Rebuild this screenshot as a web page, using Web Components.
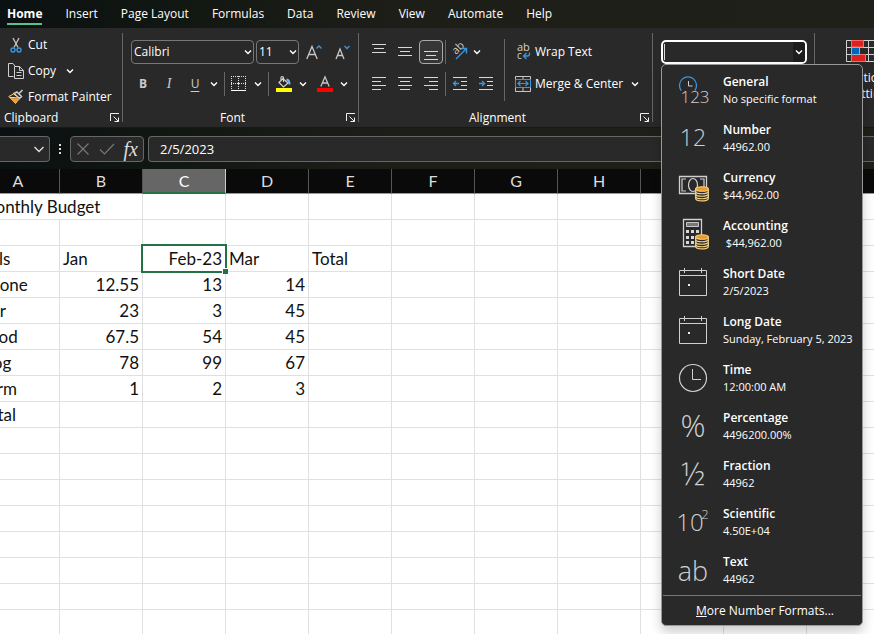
<!DOCTYPE html>
<html lang="en">
<head>
<meta charset="utf-8">
<title>Monthly Budget</title>
<style>
html, body { height: 100%; }
body { margin: 0; overflow: hidden; background: #fff; color: #fff; font: 12px/16px "Open Sans", "Noto Sans", sans-serif; }
</style>
</head>
<body>
<sheet-app></sheet-app>
<script>
const chevron = '<path d="M2 3.5L5 6.5L8 3.5" fill="none" stroke="currentColor" stroke-width="1.4"/>';
const lines = (rows) => rows.map(([x, y, w]) => `<path d="M${x} ${y}.5h${w}" stroke="#d8d8d8"/>`).join('');
const coins = '<g transform="translate(16 12)"><path d="M.7 3v9.500c0 3.200 12.600 3.200 12.600 0V3z" fill="#2b2b2b" stroke="#f5cf80" stroke-width="1.300"/><path d="M.7 5.500c0 3 12.600 3 12.600 0M.7 8c0 3 12.600 3 12.600 0M.7 10.500c0 3 12.600 3 12.600 0" fill="none" stroke="#f5cf80" stroke-width="1.200"/><ellipse cx="7" cy="3" rx="6.300" ry="2.300" fill="#ee9a25" stroke="#f5cf80" stroke-width="1.100"/></g>';
const glyph = (t, size, x, y) => `<text x="${x}" y="${y}" font-size="${size}" font-weight="300" fill="#d0d0d0" text-anchor="middle">${t}</text>`;
const calendar = '<path d="M1.500 3.500h27v25h-27zM1.500 8.500h27M6.500 1v5M23.500 1v5" fill="none" stroke="#d0d0d0"/><path d="M10 17h2v2h-2z" fill="#eee"/>';
const ICONS = {
  chevron: [10, 10, chevron],
  cut: [16, 16, '<path d="M5 1l5 9.500M11 1L6 10.500" stroke="#c8c8c8" stroke-width="1.300" fill="none"/><circle cx="5" cy="13" r="2" fill="none" stroke="#3a96dd" stroke-width="1.400"/><circle cx="11" cy="13" r="2" fill="none" stroke="#3a96dd" stroke-width="1.400"/>'],
  copy: [16, 16, '<path d="M5.500 13.500h-5V.5h4.500l2 2.500M6.500 3.500h5l4 4v8h-9zM11.500 3.500v4h4M8.500 9.500h5M8.500 12.500h5" fill="none" stroke="#d0d0d0"/>'],
  painter: [16, 16, '<path d="M14.500 1L11 4.500M9 3l4.500 4.500-2 2L6 4.500z" fill="none" stroke="#d0d0d0" stroke-width="1.500"/><path d="M5.500 5L.8 7.500l6.700 7 4-5z" fill="#292929" stroke="#f5cf80"/><path d="M2 9l9.500.5-4 5z" fill="#f0a030"/><path d="M2 8.300l9 .7" stroke="#ffe0a0"/>'],
  launcher: [10, 10, '<path d="M.5 8V.5H9M3.500 3.500l5 5M4.500 8.500h4v-4" fill="none" stroke="#eee"/>'],
  grow: [16, 16, '<path d="M.8 15L6 2.500 11.200 15M2.700 10.500h6.600" fill="none" stroke="#c8c8c8" stroke-width="1.300"/><path d="M10.500 4.500L13 2l2.500 2.500" fill="none" stroke="#3a96dd" stroke-width="1.300"/>'],
  shrink: [16, 16, '<path d="M2 15l4-10 4 10M3.500 11.500h5" fill="none" stroke="#c8c8c8" stroke-width="1.300"/><path d="M10.500 2L13 4.500 15.500 2" fill="none" stroke="#3a96dd" stroke-width="1.300"/>'],
  borders: [16, 16, '<path d="M0 .5h15M0 7.500h15M.5 0v14M7.500 0v14M14.500 0v14" fill="none" stroke="#ddd" stroke-dasharray="1 1"/><path d="M6 7.500h3M7.500 6v3" stroke="#ddd"/><path d="M0 14.500h15" stroke="#fff"/>'],
  fill: [16, 16, '<path d="M3 6.500l4-4 5 4.500-4.500 4-4.500-4.500zM5 4.500V1.500c0-1.200 2.500-1.200 2.500 0V6" fill="none" stroke="#d0d0d0" stroke-width="1.200"/><path d="M10.500 3.500q3 .5 3 5" fill="none" stroke="#7bb8e8" stroke-width="2"/><path d="M0 12h16v4H0z" fill="#ff0"/>'],
  color: [16, 16, '<path d="M3.800 10.500L8 .8l4.200 9.700M5.300 7h5.400" fill="none" stroke="#c8c8c8" stroke-width="1.300"/><path d="M0 12h16v4H0z" fill="#f00"/>'],
  top: [16, 16, lines([[1, 0, 14], [3, 4, 10], [1, 8, 14]])],
  middle: [16, 16, lines([[1, 3, 14], [3, 7, 10], [1, 11, 14]])],
  bottom: [16, 16, lines([[1, 7, 14], [3, 11, 10], [1, 15, 14]])],
  left: [16, 16, lines([[1, 1, 14], [1, 5, 9], [1, 9, 14], [1, 13, 9]])],
  center: [16, 16, lines([[1, 1, 14], [3, 5, 10], [1, 9, 14], [3, 13, 10]])],
  right: [16, 16, lines([[1, 1, 14], [6, 5, 9], [1, 9, 14], [6, 13, 9]])],
  outdent: [16, 16, lines([[1, 1, 14], [9, 5, 6], [9, 9, 6], [1, 13, 14]]) + '<path d="M7 7.500H1.500M4 5L1.500 7.500 4 10" fill="none" stroke="#3a96dd" stroke-width="1.300"/>'],
  indent: [16, 16, lines([[1, 1, 14], [9, 5, 6], [9, 9, 6], [1, 13, 14]]) + '<path d="M1 7.500h5.500M4 5l2.500 2.500L4 10" fill="none" stroke="#3a96dd" stroke-width="1.300"/>'],
  orient: [18, 18, '<text transform="translate(6 12) rotate(-45)" font-size="11" fill="#c8c8c8">ab</text><path d="M6 16L16 6M11.500 5.500h5v5" fill="none" stroke="#3a96dd" stroke-width="1.400"/>'],
  wrap: [16, 16, '<text x="2" y="7" font-size="11" fill="#d0d0d0">ab</text><text x="2" y="15" font-size="10" fill="#d0d0d0">c</text><path d="M14.500 8.500v1.500q0 2-2 2H9M11.500 9L8.500 12l3 3" fill="none" stroke="#3a96dd" stroke-width="1.300"/>'],
  merge: [16, 16, '<path d="M.5 .5h15v15H.5zM8 0v4M8 12v4" fill="none" stroke="#c8c8c8"/><path d="M.5 3.500h15v8H.5z" fill="#292929" stroke="#3a96dd"/><path d="M3 7.500h10M5.500 5L3 7.500l2.500 2.500M10.500 5L13 7.500l-2.500 2.500" fill="none" stroke="#3a96dd" stroke-width="1.200"/>'],
  cond: [34, 22, '<path d="M.5 .5h33v21H.5zM0 7.500h34M0 14.500h34M5.500 0v22M22.500 0v22M28.500 0v22" fill="none" stroke="#d0d0d0"/><path d="M5.500 .5h12v6.500h-12zM5.500 14.500h14v7h-14z" fill="#d9231c" stroke="#f66"/><path d="M5.500 7.500h8v7h-8z" fill="#0067b8" stroke="#7bb8e8"/>'],
  cancel: [14, 14, '<path d="M1.500 1.500l11 11M12.500 1.500l-11 11" stroke="#777" stroke-width="1.200"/>'],
  accept: [16, 14, '<path d="M1 7.500l4.500 4.500L15 2" fill="none" stroke="#777" stroke-width="1.200"/>'],
  wide: [10, 10, '<path d="M.5 3L5 7.500 9.500 3" fill="none" stroke="#ddd" stroke-width="1.400"/>'],
  dots: [4, 14, '<path d="M1 2h2v2H1zM1 6h2v2H1zM1 10h2v2H1z" fill="#ddd"/>'],
  general: [30, 30, '<path d="M3.200 15.500A8.500 8.500 0 1 1 16.800 15.500" fill="none" stroke="#3a96dd" stroke-width="1.300"/><path d="M10.500 6v5h4" fill="none" stroke="#d0d0d0"/>' + glyph('123', 17, 17, 28)],
  number: [30, 30, glyph('12', 23, 15, 23)],
  currency: [30, 30, '<path d="M1.500 5.500h27v17h-27z" fill="none" stroke="#d0d0d0" stroke-width="1.300"/><path d="M8 8H4v12h4M22 8h4v8" fill="none" stroke="#d0d0d0" stroke-width="1.200"/><ellipse cx="15" cy="14" rx="4.500" ry="6.500" fill="none" stroke="#d0d0d0" stroke-width="1.200"/><g transform="translate(1 3)">' + coins + '</g>'],
  accounting: [30, 30, '<path d="M5.500 .5h18v27h-18z" fill="none" stroke="#d0d0d0" stroke-width="1.300"/><path d="M8.500 3.500h12v4h-12z" fill="#777" stroke="#c8c8c8"/><path d="M8 11h3v3H8zM13 11h3v3h-3zM18 11h3v3h-3zM8 17h3v3H8zM13 17h3v3h-3zM8 22h3v3H8zM13 22h3v3h-3z" fill="#d8d8d8"/><g transform="translate(1 3)">' + coins + '</g>'],
  date: [30, 30, calendar],
  time: [30, 30, '<circle cx="15" cy="15" r="13.500" fill="none" stroke="#d0d0d0" stroke-width="1.200"/><path d="M14.500 6v10.500H23" fill="none" stroke="#d0d0d0"/>'],
  percent: [30, 30, glyph('%', 31, 15, 26)],
  fraction: [30, 30, glyph('½', 31, 15, 26)],
  scientific: [30, 30, glyph('10', 24, 12, 24) + glyph('2', 13, 27, 12)],
  text: [30, 30, glyph('ab', 27, 15, 26)]
};

const define = (name, css, html) => {
  const t = document.createElement('template');
  customElements.define(name, class extends HTMLElement {
    connectedCallback() {
      if (this.shadowRoot) return;
      t.innerHTML = `<style>*{box-sizing:border-box}button,input,select{font:inherit;color:inherit;background:none;border:0;margin:0;padding:0}${css}</style>${typeof html === 'function' ? html(this) : html}`;
      this.attachShadow({ mode: 'open' }).append(t.content.cloneNode(true));
    }
  });
};

define('ui-icon', ':host{display:inline-flex;flex:none}svg{display:block;overflow:visible}', (el) => {
  const [w, h, body] = ICONS[el.getAttribute('name')];
  return `<svg width="${w}" height="${h}" viewBox="0 0 ${w} ${h}" aria-hidden="true">${body}</svg>`;
});

/* Button with an icon and optional slotted text */
define('tool-button', `:host{display:flex;flex:none;width:26px;height:24px}
button{display:flex;align-items:center;justify-content:center;gap:4px;width:100%;white-space:nowrap}
:host([wide]){width:auto}:host([wide]) button{width:auto}
:host([small]){width:12px}
:host([active]) button{border:1px solid #aaa;border-radius:4px;background:#363636}
:host([active]){width:24px;margin:0 1px}`,
(el) => `<button type="button" aria-label="${el.getAttribute('label') || el.textContent}"${el.hasAttribute('active') ? ' aria-pressed="true"' : ''}>${el.getAttribute('icon') ? `<ui-icon name="${el.getAttribute('icon')}"></ui-icon>` : ''}<slot></slot></button>`);

define('tool-select', `:host{display:grid;height:24px}
select,ui-icon{grid-area:1/1}
select{appearance:none;width:100%;height:100%;border:1px solid #777;border-radius:4px;padding:0 2px}
ui-icon{place-self:center end;margin-right:1px;pointer-events:none}`,
(el) => `<select aria-label="${el.getAttribute('label')}"><option>${el.getAttribute('value')}</option></select><ui-icon name="chevron"></ui-icon>`);

define('tool-rule', ':host{flex:none;width:1px;height:24px;background:#666}', '');

define('ribbon-group', `:host{display:flex;flex-direction:column;flex:none;padding-top:4px;background:linear-gradient(#666,#666) right 0 top 5px/1px 89px no-repeat}
.body{height:78px}
footer{display:flex;align-items:center;height:16px;padding:0 3px 0 4px}
footer span{flex:1;text-align:center;padding-right:8px}
:host([start]) footer span{text-align:left}
footer button{display:flex}`,
(el) => `<div class="body"><slot></slot></div><footer><span>${el.getAttribute('label') || ''}</span>${el.getAttribute('label') ? `<button type="button" aria-label="${el.getAttribute('label')} settings"><ui-icon name="launcher"></ui-icon></button>` : ''}</footer>`);

define('ribbon-tabs', `:host{display:block}
nav{display:flex;gap:23px;height:28px;padding:0 7px}
a{color:#fff;text-decoration:none;height:26px;line-height:27px;white-space:nowrap}
a[aria-current]{font-weight:700;box-shadow:inset 0 -2px #5cc08a;height:25px}`,
() => `<nav aria-label="Ribbon">${['Home', 'Insert', 'Page Layout', 'Formulas', 'Data', 'Review', 'View', 'Automate', 'Help'].map((t, i) => `<a href="#${t.replace(' ', '-')}"${i ? '' : ' aria-current="page"'}>${t}</a>`).join('')}</nav>`);

define('format-item', `:host{display:block}
button{display:grid;grid-template-columns:30px 1fr;column-gap:15px;align-items:center;width:100%;height:48px;padding-left:16px;text-align:left;white-space:pre}
b{display:block;font-weight:600;height:17px}span{display:block;font-size:11px}`,
(el) => `<button type="button" role="option"><ui-icon name="${el.getAttribute('icon')}"></ui-icon><div><b>${el.getAttribute('name')}</b><span><slot></slot></span></div></button>`);

define('format-menu', `:host{display:block;width:202px;background:#292929;border:1px solid #999;border-radius:5px;box-shadow:0 6px 12px #0003}
.list{padding:1px 0}
.more{display:block;width:calc(100% - 2px);margin:0 1px;height:30px;border-top:1px solid #777;padding-left:6px}`,
() => `<div class="list" role="listbox" aria-label="Number format">${[
  ['general', 'General', 'No specific format'], ['number', 'Number', '44962.00'], ['currency', 'Currency', '$44,962.00'],
  ['accounting', 'Accounting', ' $44,962.00'], ['date', 'Short Date', '2/5/2023'], ['date', 'Long Date', 'Sunday, February 5, 2023'],
  ['time', 'Time', '12:00:00 AM'], ['percent', 'Percentage', '4496200.00%'], ['fraction', 'Fraction', '44962'],
  ['scientific', 'Scientific', '4.50E+04'], ['text', 'Text', '44962']
].map(([i, n, s]) => `<format-item icon="${i}" name="${n}">${s}</format-item>`).join('')}</div><button type="button" class="more"><u>M</u>ore Number Formats...</button>`);

define('format-picker', `:host{display:block;position:relative;width:146px}
.box{display:flex;align-items:center;height:24px;border:2px solid #fff;border-radius:5px;overflow:hidden}
input{flex:1;min-width:0;height:16px;border-left:1px solid #ddd;margin-left:1px;outline:0}
button{display:flex;align-items:center;justify-content:center;width:12px;height:20px;background:#1d1d1d}
format-menu{position:absolute;z-index:5;top:24px;left:0}`,
`<div class="box"><input type="text" aria-label="Number format"><button type="button" aria-label="Show number formats"><ui-icon name="chevron"></ui-icon></button></div><format-menu></format-menu>`);

define('main-ribbon', `:host{display:flex;height:100px;background:#292929;border-bottom:1px solid #181818}
.clip{display:grid;grid-template-rows:repeat(3,26px);align-items:center;padding-left:8px}
.row{display:flex;align-items:center}
.rows{display:grid;grid-template-rows:24px 24px;row-gap:8px;padding-top:8px}
.font{padding-left:7px}
.font .row:first-child{gap:2px;padding-left:1px}
.align{display:flex;padding-left:7px}
.num{padding:8px 8px 0 8px}
.cond{display:grid;justify-items:center;gap:8px;width:96px;padding-top:8px}
.cond span{text-align:center}
.cond span ui-icon{margin-left:4px}
.b{font-weight:700;color:#ccc}.i{font:italic 14px/16px "Liberation Serif",serif;color:#ccc}.u{text-decoration:underline;text-underline-offset:3px;color:#ccc}`,
`<ribbon-group label="Clipboard" start style="width:123px"><div class="clip">
<tool-button wide icon="cut">Cut</tool-button>
<div class="row"><tool-button wide icon="copy">Copy</tool-button><tool-button small icon="chevron" label="Copy options" style="margin-left:8px"></tool-button></div>
<tool-button wide icon="painter">Format Painter</tool-button></div></ribbon-group>
<ribbon-group label="Font" style="width:236px"><div class="rows font">
<div class="row"><tool-select label="Font" value="Calibri" style="width:123px"></tool-select><tool-select label="Font size" value="11" style="width:43px"></tool-select><tool-button icon="grow" label="Increase font size"></tool-button><tool-button icon="shrink" label="Decrease font size"></tool-button></div>
<div class="row"><tool-button label="Bold"><span class="b">B</span></tool-button><tool-button label="Italic"><span class="i">I</span></tool-button><tool-button label="Underline"><span class="u">U</span></tool-button><tool-button small icon="chevron" label="Underline options"></tool-button><tool-rule style="margin:0 1px 0 4px"></tool-rule>
<tool-button icon="borders" label="Borders"></tool-button><tool-button small icon="chevron" label="Border options"></tool-button><tool-rule style="margin:0 2px 0 4px"></tool-rule>
<tool-button icon="fill" label="Fill color"></tool-button><tool-button small icon="chevron" label="Fill options"></tool-button><tool-button icon="color" label="Font color" style="margin-left:3px"></tool-button><tool-button small icon="chevron" label="Font color options"></tool-button></div>
</div></ribbon-group>
<ribbon-group label="Alignment" style="width:294px"><div class="align">
<div class="rows"><div class="row"><tool-button icon="top" label="Top align"></tool-button><tool-button icon="middle" label="Middle align"></tool-button><tool-button icon="bottom" label="Bottom align" active></tool-button><tool-rule style="margin:0 1px"></tool-rule><tool-button icon="orient" label="Orientation" style="width:24px"></tool-button><tool-button small icon="chevron" label="Orientation options"></tool-button></div>
<div class="row"><tool-button icon="left" label="Align left"></tool-button><tool-button icon="center" label="Center"></tool-button><tool-button icon="right" label="Align right"></tool-button><tool-rule style="margin:0 1px"></tool-rule><tool-button icon="outdent" label="Decrease indent"></tool-button><tool-button icon="indent" label="Increase indent"></tool-button></div></div>
<tool-rule style="height:62px;margin:7px 10px 0 5px"></tool-rule>
<div class="rows"><tool-button wide icon="wrap">Wrap Text</tool-button><div class="row"><tool-button wide icon="merge">Merge &amp; Center</tool-button><tool-button small icon="chevron" label="Merge options" style="margin-left:6px"></tool-button></div></div>
</div></ribbon-group>
<ribbon-group style="width:162px"><div class="num"><format-picker></format-picker></div></ribbon-group>
<ribbon-group style="width:96px"><button type="button" class="cond"><ui-icon name="cond"></ui-icon><span>Conditional<br>Formatting<ui-icon name="chevron"></ui-icon></span></button></ribbon-group>`);

define('formula-bar', `:host{display:flex;align-items:center;height:41px;padding-top:1px}
.box{display:flex;align-items:center;height:26px;border:1px solid #666;border-radius:4px;background:#292929}
.name{width:50px;border-left:0;border-radius:0 4px 4px 0;justify-content:flex-end;padding-right:5px}
.name input{flex:1;min-width:0}
button{display:flex}
ui-icon.d{margin:0 8px}
.acts{width:74px;justify-content:space-between;padding:0 5px}
.fx{font:italic 20px/20px "Liberation Serif",serif;color:#ddd}
.value{flex:1;margin-left:4px;border-right:0;border-radius:4px 0 0 4px}
.value input{flex:1;padding-left:11px;font-size:13px}`,
`<div class="box name"><input aria-label="Name box"><button type="button" aria-label="Show names"><ui-icon name="wide"></ui-icon></button></div><ui-icon class="d" name="dots"></ui-icon>
<div class="box acts"><button type="button" aria-label="Cancel"><ui-icon name="cancel"></ui-icon></button><button type="button" aria-label="Enter"><ui-icon name="accept"></ui-icon></button><button type="button" class="fx" aria-label="Insert function">fx</button></div>
<div class="box value"><input aria-label="Formula" value="2/5/2023"></div>`);

const ROWS = [['Monthly Budget'], [], ['Bills', 'Jan', 'Feb-23', 'Mar', 'Total'], ['Phone', 12.55, 13, 14], ['Car', 23, 3, 45], ['Food', 67.5, 54, 45], ['Dog', 78, 99, 67], ['Farm', 1, 2, 3], ['Total']];
define('data-grid', `:host{display:block;overflow:hidden;flex:1;background:#fff;color:#111;font:17px/20px Lato,sans-serif}
table{border-collapse:separate;border-spacing:0;table-layout:fixed;width:913px;margin-left:-23px}
th{height:25px;padding:0;font-weight:400;font-size:16px;line-height:20px;color:#ddd;background:#0a0a0a;border-right:1px solid #555;border-bottom:1px solid #999}
th.on{background:#666;color:#fff;border-bottom:2px solid #217346;border-right-color:#ccc}
td{height:26px;padding:0 3px 0 3px;line-height:24px;border:solid #e0e0e0;border-width:0 1px 1px 0;white-space:nowrap}
td.n{text-align:right}
td.sel{position:relative}
td.sel::before{content:"";position:absolute;inset:-2px;border:2px solid #217346}
td.sel::after{content:"";position:absolute;right:-3px;bottom:-3px;width:5px;height:5px;background:#217346;border:solid #fff;border-width:1px 0 0 1px;box-sizing:content-box}`,
() => {
  const cols = [...'ABCDEFGHIJK'];
  let h = '<table><thead><tr>' + cols.map((c) => `<th scope="col"${c === 'C' ? ' class="on"' : ''}>${c}</th>`).join('') + '</tr></thead><tbody>';
  for (let r = 0; r < 18; r++) {
    const row = ROWS[r] || [];
    h += '<tr>';
    for (let c = 0; c < 11; c++) {
      if (r === 0 && c === 1) continue;
      const v = row[c] ?? '', s = v === 'Feb-23';
      h += `<td${r === 0 && c === 0 ? ' colspan="2"' : ''} class="${typeof v === 'number' || s ? 'n' : ''}${s ? ' sel' : ''}">${v}</td>`;
    }
    h += '</tr>';
  }
  return h + '</tbody></table>';
});

define('sheet-app', `:host{display:flex;flex-direction:column;height:100%;overflow:hidden;background:linear-gradient(90deg,#0b1012,#111711 20%,#1e1e19 45%,#20201b)}
main-ribbon{position:relative;z-index:2;flex:none}data-grid{min-height:0}`,
'<ribbon-tabs></ribbon-tabs><main-ribbon></main-ribbon><formula-bar></formula-bar><data-grid></data-grid>');
</script>
</body>
</html>
